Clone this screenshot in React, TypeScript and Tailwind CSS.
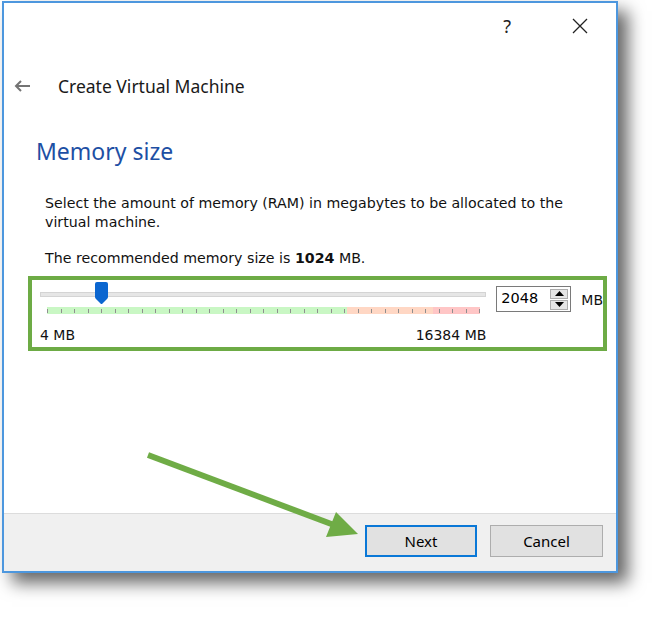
import React from 'react';

const ticks = Array.from({ length: 33 }, (_, i) => i);

const uiFont = "font-['Noto_Sans',sans-serif]";
const dlgFont = "font-['DejaVu_Sans',sans-serif]";

const SpinBox = () => (
  <div className="flex h-[26px] w-[75px] items-center justify-between border border-[#7a7a7a] bg-white pl-[4px] pr-[2px]">
    <span className={`${dlgFont} text-[14.5px] text-black`}>2048</span>
    <div className="flex flex-col gap-px">
      <div className="flex h-[10px] w-[18px] items-center justify-center border border-[#adadad] bg-[#e5e5e5]">
        <svg width="9" height="5" viewBox="0 0 9 5"><path d="M0 5 L4.5 0 L9 5 Z" fill="#000" /></svg>
      </div>
      <div className="flex h-[10px] w-[18px] items-center justify-center border border-[#adadad] bg-[#e5e5e5]">
        <svg width="9" height="5" viewBox="0 0 9 5"><path d="M0 0 L9 0 L4.5 5 Z" fill="#000" /></svg>
      </div>
    </div>
  </div>
);

const MemorySlider = () => (
  <div className="w-[447px]">
    <div className="relative h-[24px] pt-[11px]">
      <div className="h-[5px] w-full border border-[#d4d4d4] bg-[#e6e6e6]" />
      <svg className="absolute left-[54px] top-[1px]" width="15" height="22" viewBox="0 0 15 22">
        <path d="M1 2 Q1 0 3 0 H12 Q14 0 14 2 V15 Q14 16 13 17 L8.5 21.5 Q7.5 22.5 6.5 21.5 L2 17 Q1 16 1 15 Z" fill="#0b66d0" />
      </svg>
    </div>
    <div className="ml-[7px] mt-[2px] flex h-[7px] w-[433px] items-center justify-between bg-[linear-gradient(to_right,#c9f7c4_0px,#c9f7c4_300px,#ffd7c4_300px,#ffd7c4_386px,#ffc6c6_386px)]">
      {ticks.map((t) => (
        <span key={t} className="h-[4px] w-px bg-[#8f8f8f]" />
      ))}
    </div>
    <div className={`${dlgFont} mt-[13px] flex h-[16px] items-center justify-between text-[14px] text-[#111]`}>
      <span>4 MB</span>
      <span>16384 MB</span>
    </div>
  </div>
);

export default function App() {
  return (
    <div className="relative h-[617px] w-[658px] overflow-hidden bg-white">
      <div className="ml-[2px] mt-px flex h-[572px] w-[616px] flex-col border-2 border-[#4d97de] bg-white shadow-[10px_10px_16px_rgba(0,0,0,0.6)]">
        {/* title bar */}
        <div className={`${uiFont} flex h-[46px] items-center justify-end gap-[61px] pr-[28px] text-[#222]`}>
          <span className="text-[18px]">?</span>
          <svg width="16" height="16" viewBox="0 0 16 16">
            <path d="M1 1 L15 15 M15 1 L1 15" stroke="#222" strokeWidth="1.3" />
          </svg>
        </div>

        {/* header */}
        <div className="mt-[25px] flex h-[24px] items-center gap-[28px] pl-[10px]">
          <svg width="16" height="12" viewBox="0 0 16 12">
            <path d="M2 6 H16 M7 1 L2 6 L7 11" stroke="#747474" strokeWidth="2" fill="none" />
          </svg>
          <span className={`${uiFont} text-[17.5px] text-[#1a1a1a]`}>Create Virtual Machine</span>
        </div>

        {/* page */}
        <h1 className={`${uiFont} ml-[32px] mt-[38px] h-[30px] text-[23px] leading-[30px] text-[#1d4fa4]`}>Memory size</h1>

        <p className={`${dlgFont} ml-[41px] mt-[28px] text-[14.2px] leading-[19px] text-[#111]`}>
          <span className="whitespace-nowrap">Select the amount of memory (RAM) in megabytes to be allocated to the</span>
          <br />
          virtual machine.
        </p>
        <p className={`${dlgFont} ml-[41px] mt-[17px] text-[14.2px] leading-[19px] text-[#111]`}>
          The recommended memory size is <b>1024</b> MB.
        </p>

        <div className="ml-[24px] mt-[8px] flex h-[75px] w-[579px] border-4 border-[#6dab45] pl-[8px] pt-px">
          <MemorySlider />
          <div className="ml-[10px] mt-[5px]">
            <SpinBox />
          </div>
          <span className={`${dlgFont} ml-[10px] mt-[9px] text-[14px] text-[#111]`}>MB</span>
        </div>

        {/* footer */}
        <div className="mt-auto flex h-[58px] justify-end gap-[13px] border-t border-[#dcdcdc] bg-[#f0f0f0] pr-[13px] pt-[11px]">
          <button className={`${uiFont} h-[32px] w-[112px] border-2 border-[#0a78d7] bg-[#e1e1e1] text-[15px] text-black`}>Next</button>
          <button className={`${uiFont} h-[32px] w-[113px] border border-[#adadad] bg-[#e1e1e1] text-[15px] text-black`}>Cancel</button>
        </div>
      </div>

      {/* annotation arrow */}
      <svg className="pointer-events-none absolute left-0 top-0" width="658" height="617">
        <line x1="148" y1="455" x2="334" y2="525" stroke="#6fac46" strokeWidth="6" />
        <polygon points="358,534 336,512 326,537" fill="#6fac46" />
      </svg>
    </div>
  );
}
